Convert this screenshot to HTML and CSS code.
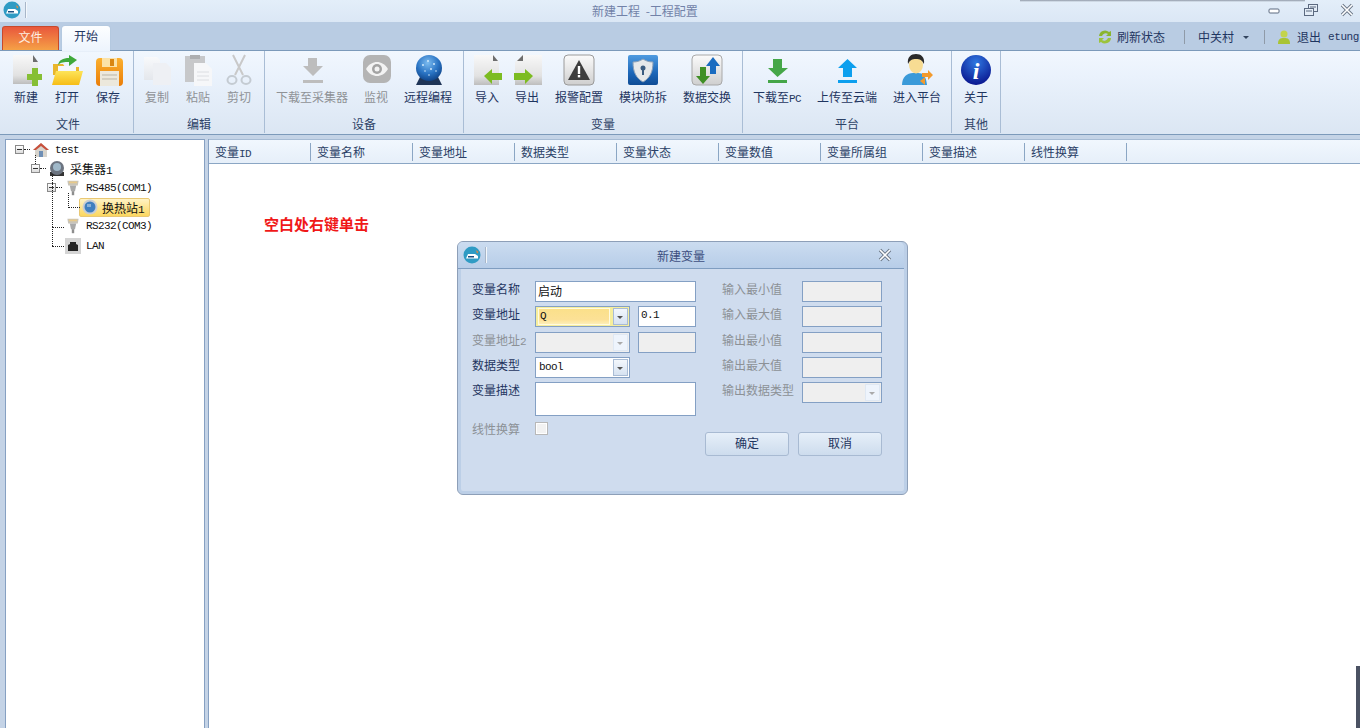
FILE: index.html
```html
<!DOCTYPE html>
<html lang="en">
<head>
  <meta charset="UTF-8" />
  <title>新建工程 -工程配置</title>
  <link rel="stylesheet" href="styles.css">
</head>
<body>
  <svg class="defs" aria-hidden="true">
    <defs>
      <linearGradient id="paper" x1="0" y1="0" x2="0" y2="1"><stop offset="0" stop-color="#f8f8f8"/><stop offset=".7" stop-color="#e2e2e2"/><stop offset="1" stop-color="#bdbdbd"/></linearGradient>
      <linearGradient id="paleDoc" x1="0" y1="0" x2="0" y2="1"><stop offset="0" stop-color="#f8f9fb"/><stop offset="1" stop-color="#e4e7ec"/></linearGradient>
      <linearGradient id="folder" x1="0" y1="0" x2="0" y2="1"><stop offset="0" stop-color="#fde45a"/><stop offset="1" stop-color="#f6bd16"/></linearGradient>
      <linearGradient id="floppy" x1="0" y1="0" x2="0" y2="1"><stop offset="0" stop-color="#fbb02f"/><stop offset="1" stop-color="#ea7d08"/></linearGradient>
      <linearGradient id="tile" x1="0" y1="0" x2="0" y2="1"><stop offset="0" stop-color="#fbfbfb"/><stop offset="1" stop-color="#cfcfcf"/></linearGradient>
      <linearGradient id="shieldBg" x1="0" y1="0" x2="0" y2="1"><stop offset="0" stop-color="#4f9be0"/><stop offset=".6" stop-color="#1c66b8"/><stop offset="1" stop-color="#0f4c95"/></linearGradient>
      <radialGradient id="globe" cx=".45" cy=".3" r=".75"><stop offset="0" stop-color="#7cbcf0"/><stop offset=".55" stop-color="#2a74c4"/><stop offset="1" stop-color="#0c3d80"/></radialGradient>
      <radialGradient id="infoBg" cx=".5" cy=".25" r=".8"><stop offset="0" stop-color="#2f77e0"/><stop offset="1" stop-color="#07108a"/></radialGradient>
      <symbol id="logo" viewBox="0 0 18 18">
        <circle cx="9" cy="9" r="8.5" fill="#2f9bc4"/>
        <path d="M3 12.5 5 8h7l3 2v2.500z" fill="#fff"/>
        <path d="M13 4l2.500 2-1.500 1.500z" fill="#e88a3a"/>
        <rect x="5" y="10" width="6" height="1.500" fill="#1b4f80"/>
      </symbol>
      <symbol id="serial" viewBox="0 0 16 20">
        <path d="M1 1h14l-1 6H2z" fill="#c9c4b8"/>
        <path d="M3 2h10v2H3z" fill="#e8c98a"/>
        <path d="M4 7h8l-1.500 7h-5z" fill="#a9a9a9"/>
        <rect x="6.500" y="14" width="3" height="5" fill="#8d8d8d"/>
      </symbol>
      <symbol id="winClose" viewBox="0 0 16 14">
        <path d="M3 2l10 10M13 2 3 12" stroke="#6b7788" stroke-width="3.400"/>
        <path d="M3 2l10 10M13 2 3 12" stroke="#fff" stroke-width="1.600"/>
      </symbol>
    </defs>
  </svg>

  <header class="titlebar">
    <svg class="logo" viewBox="0 0 18 18"><use href="#logo"/></svg>
    <span class="title-sep"></span>
    <span class="app-title">新建工程 -工程配置</span>
    <div class="win-btns">
      <svg viewBox="0 0 16 14"><rect x="2" y="6" width="10" height="4" rx="1" fill="#fff" stroke="#5c6a80"/></svg>
      <svg viewBox="0 0 16 14"><rect x="5.500" y="1.500" width="9" height="7" fill="#e4edf7" stroke="#5c6a80"/><rect x="1.500" y="5.500" width="9" height="7" fill="#e4edf7" stroke="#5c6a80"/><path d="M3 8h6M7 4h6" stroke="#5c6a80"/></svg>
      <svg viewBox="0 0 16 14"><use href="#winClose"/></svg>
    </div>
  </header>

  <nav class="tabstrip">
    <span class="tab tab-file">文件</span>
    <span class="tab tab-home">开始</span>
    <div class="status">
      <svg class="status-icon" viewBox="0 0 16 16"><path d="M2 7a6 6 0 0 1 10-4l2-1v5H9l2-2a4 4 0 0 0-6 2z" fill="#8ab52f"/><path d="M14 9a6 6 0 0 1-10 4l-2 1V9h5l-2 2a4 4 0 0 0 6-2z" fill="#9cc33c"/></svg>
      <span class="status-refresh">刷新状态</span>
      <span class="status-sep"></span>
      <span class="status-site">中关村</span>
      <span class="status-caret"></span>
      <span class="status-sep"></span>
      <svg class="status-user" viewBox="0 0 12 14"><circle cx="6" cy="4" r="3.500" fill="#c3d44c"/><path d="M0 14c0-5 2-6 6-6s6 1 6 6z" fill="#a9c434"/></svg>
      <span class="status-exit">退出</span>
      <span class="status-name lat">etung</span>
    </div>
  </nav>

  <section class="ribbon">
    <div class="group group-file">
      <div class="tools">
        <div class="tool">
          <svg viewBox="0 0 32 32"><path d="M3 1h18l7 7v22H3z" fill="url(#paper)"/><path d="M23 1l5 7h-5z" fill="#6d6d6d"/><path d="M22 14h6v6h5v6h-5v6h-6v-6h-5v-6h5z" fill="#86bf35"/></svg>
          <span>新建</span>
        </div>
        <div class="tool">
          <svg viewBox="0 0 32 32"><path d="M2 10h10l2 3h14v8H2z" fill="#e9b62c"/><rect x="7" y="12" width="18" height="10" fill="#f4f7fa"/><path d="M5 17h27l-4 14H1z" fill="url(#folder)"/><path d="M7 11c1-5 5-7 11-7V1l8 5-8 6V8c-5 0-8 0-11 3z" fill="#3fa93a"/></svg>
          <span>打开</span>
        </div>
        <div class="tool">
          <svg viewBox="0 0 32 32"><rect x="4" y="4" width="27" height="28" rx="4" fill="url(#floppy)"/><rect x="10" y="4" width="15" height="9" fill="#fbe2a8"/><rect x="18" y="5" width="4" height="7" fill="#d98612"/><rect x="8" y="17" width="19" height="15" fill="#ece8dc"/><path d="M10 21h15M10 25h15" stroke="#b9b5a8"/></svg>
          <span>保存</span>
        </div>
      </div>
      <div class="group-name">文件</div>
    </div>

    <div class="group group-edit">
      <div class="tools">
        <div class="tool off">
          <svg viewBox="0 0 32 32"><path d="M3 3h13l3 3v20H3z" fill="url(#paleDoc)"/><path d="M12 9h13l5 5v17H12z" fill="#eef0f4"/></svg>
          <span>复制</span>
        </div>
        <div class="tool off">
          <svg viewBox="0 0 32 32"><rect x="3" y="2" width="20" height="26" fill="#c7c8ca"/><rect x="8" y="1" width="10" height="4" fill="#adaeb0"/><path d="M12 9h12l6 6v17H12z" fill="#f6f7f9"/><path d="M15 18h12M15 22h12M15 26h12" stroke="#dcdee2"/></svg>
          <span>粘贴</span>
        </div>
        <div class="tool off">
          <svg viewBox="0 0 32 32"><path d="M10 1l10 20M22 1 12 21" stroke="#c9c9c9" stroke-width="2" fill="none"/><ellipse cx="9" cy="26" rx="4.500" ry="4" fill="none" stroke="#c4cbd2" stroke-width="2"/><ellipse cx="23" cy="26" rx="4.500" ry="4" fill="none" stroke="#c4cbd2" stroke-width="2"/></svg>
          <span>剪切</span>
        </div>
      </div>
      <div class="group-name">编辑</div>
    </div>

    <div class="group group-device">
      <div class="tools">
        <div class="tool off">
          <svg viewBox="0 0 32 32"><path d="M12 4h9v8h6L17 22 7 12h5z" fill="#bdbdbd"/><rect x="7" y="26" width="20" height="3" fill="#bdbdbd"/></svg>
          <span>下载至采集器</span>
        </div>
        <div class="tool off">
          <svg viewBox="0 0 32 32"><rect x="3" y="1" width="28" height="28" rx="7" fill="#b4b4b4"/><path d="M6 15c3-5 7-7 11-7s8 2 11 7c-3 5-7 7-11 7s-8-2-11-7z" fill="#f3f3f3"/><circle cx="17" cy="15" r="5" fill="#a3a3a3"/><circle cx="17" cy="15" r="2.500" fill="#f3f3f3"/></svg>
          <span>监视</span>
        </div>
        <div class="tool">
          <svg viewBox="0 0 32 32"><path d="M8 23h18l4 8H4z" fill="#1f3557"/><circle cx="17" cy="14" r="13" fill="url(#globe)"/><g fill="#cfe8fb"><circle cx="11" cy="11" r="1"/><circle cx="16" cy="7" r="1"/><circle cx="22" cy="10" r="1"/><circle cx="13" cy="17" r=".8"/><circle cx="19" cy="15" r="1"/><circle cx="24" cy="17" r=".8"/><circle cx="17" cy="21" r=".8"/></g></svg>
          <span>远程编程</span>
        </div>
      </div>
      <div class="group-name">设备</div>
    </div>

    <div class="group group-vars">
      <div class="tools">
        <div class="tool">
          <svg viewBox="0 0 32 32"><path d="M3 1h19l6 7v23H3z" fill="url(#paper)"/><path d="M22 1l5 6h-5z" fill="#6d6d6d"/><path d="M13 22l8-7v4h10v7H21v4z" fill="#7cbc21"/></svg>
          <span>导入</span>
        </div>
        <div class="tool">
          <svg viewBox="0 0 32 32"><path d="M31 1H12L4 8v23h27z" fill="url(#paper)"/><path d="M12 1 6 7h6z" fill="#6d6d6d"/><path d="M22 22l-8-7v4H3v7h11v4z" fill="#7cbc21"/></svg>
          <span>导出</span>
        </div>
        <div class="tool">
          <svg viewBox="0 0 32 32"><rect x="1" y="1" width="30" height="30" rx="4" fill="url(#tile)" stroke="#9a9a9a"/><path d="M16 6l11 20H5z" fill="#3d3d3d"/><rect x="14.800" y="12" width="2.400" height="8" fill="#fff"/><rect x="14.800" y="21" width="2.400" height="2.400" fill="#fff"/></svg>
          <span>报警配置</span>
        </div>
        <div class="tool">
          <svg viewBox="0 0 32 32"><rect x="1" y="1" width="30" height="30" rx="2" fill="url(#shieldBg)"/><path d="M16 5c3 2 6 3 10 3 0 10-3 16-10 20C9 24 6 18 6 8c4 0 7-1 10-3z" fill="#e6e8ea" stroke="#8aa0b8"/><circle cx="16" cy="14" r="2.500" fill="#3b5c80"/><rect x="15" y="15" width="2" height="6" fill="#3b5c80"/></svg>
          <span>模块防拆</span>
        </div>
        <div class="tool">
          <svg viewBox="0 0 32 32"><rect x="1" y="1" width="30" height="30" rx="4" fill="url(#tile)" stroke="#a8a8a8"/><path d="M22 3l7 9h-4v8h-6v-8h-4z" fill="#1a6cc0"/><path d="M9 13h6v9h4l-7 8-7-8h4z" fill="#3f8f25"/></svg>
          <span>数据交换</span>
        </div>
      </div>
      <div class="group-name">变量</div>
    </div>

    <div class="group group-platform">
      <div class="tools">
        <div class="tool">
          <svg viewBox="0 0 32 32"><path d="M12 5h9v9h6L16.500 23 7 14h5z" fill="#45a648"/><rect x="7" y="26" width="19" height="3" fill="#45a648"/></svg>
          <span>下载至<i class="lat">PC</i></span>
        </div>
        <div class="tool">
          <svg viewBox="0 0 32 32"><path d="M16.500 5 26 14h-5v9h-9v-9H7z" fill="#0c9fee"/><rect x="7" y="26" width="19" height="3" fill="#0c9fee"/></svg>
          <span>上传至云端</span>
        </div>
        <div class="tool">
          <svg viewBox="0 0 32 32"><path d="M1 31c0-8 5-12 11-12h5c5 0 8 3 9 12z" fill="#3a9ad9"/><ellipse cx="15" cy="11" rx="7" ry="8.500" fill="#f7dc93"/><path d="M7 10C6 3 10 0 15 0s9 3 8 10c-2-4-4-5-8-5s-6 1-8 5z" fill="#2a2a2a"/><path d="M21 19h6v-3l5 5-5 5v-3h-6zM24 31l-5-4 5-4z" fill="#f29a2e"/></svg>
          <span>进入平台</span>
        </div>
      </div>
      <div class="group-name">平台</div>
    </div>

    <div class="group group-other">
      <div class="tools">
        <div class="tool">
          <svg viewBox="0 0 32 32"><circle cx="16" cy="16" r="15" fill="url(#infoBg)"/><text x="16" y="25" class="info-i">i</text></svg>
          <span>关于</span>
        </div>
      </div>
      <div class="group-name">其他</div>
    </div>
  </section>

  <main class="workspace">
    <aside class="tree">
      <div class="node lvl0">
        <span class="box"></span>
        <svg viewBox="0 0 16 16"><path d="M8 1 0 8h2v7h12V8h2z" fill="#d8d4cc"/><path d="M8 1 0 8h3l5-4 5 4h3z" fill="#c8503c"/><rect x="6" y="9" width="4" height="6" fill="#6f8fb5"/></svg>
        <span class="lat name">test</span>
      </div>
      <div class="node lvl1">
        <span class="box"></span>
        <svg viewBox="0 0 16 16"><path d="M1 11h14v4H1z" fill="#333"/><circle cx="8" cy="7" r="7" fill="#6c7480"/><circle cx="8" cy="6" r="4" fill="#9fb8c9"/></svg>
        <span class="name">采集器<i class="lat">1</i></span>
      </div>
      <div class="node lvl2">
        <span class="box"></span>
        <svg viewBox="0 0 16 20"><use href="#serial"/></svg>
        <span class="lat name">RS485(COM1)</span>
      </div>
      <div class="node lvl3">
        <span class="selected">
          <svg viewBox="0 0 16 16"><circle cx="8" cy="8" r="7.500" fill="#c9ced4"/><circle cx="8" cy="8" r="5.500" fill="#3f7fc0"/><path d="M5 5h4v3H5z" fill="#8ab1d6"/></svg>
          <span class="name">换热站<i class="lat">1</i></span>
        </span>
      </div>
      <div class="node lvl2b">
        <svg viewBox="0 0 16 20"><use href="#serial"/></svg>
        <span class="lat name">RS232(COM3)</span>
      </div>
      <div class="node lvl2b last">
        <svg viewBox="0 0 16 16"><rect width="16" height="16" fill="#d4d4d4"/><path d="M3 13V7l2-1V4h6v2l2 1v6z" fill="#222"/></svg>
        <span class="lat name">LAN</span>
      </div>
    </aside>

    <section class="table">
      <div class="thead">
        <span class="th">变量<i class="lat">ID</i></span>
        <span class="th">变量名称</span>
        <span class="th">变量地址</span>
        <span class="th">数据类型</span>
        <span class="th">变量状态</span>
        <span class="th">变量数值</span>
        <span class="th">变量所属组</span>
        <span class="th">变量描述</span>
        <span class="th">线性换算</span>
      </div>
      <p class="hint">空白处右键单击</p>
    </section>
  </main>

  <div class="dialog">
    <div class="dlg-head">
      <svg class="logo" viewBox="0 0 18 18"><use href="#logo"/></svg>
      <span class="title-sep"></span>
      <span class="dlg-title">新建变量</span>
      <svg class="dlg-close" viewBox="0 0 16 14"><use href="#winClose"/></svg>
    </div>
    <div class="dlg-body">
      <div class="col col-left">
        <div class="row">
          <label>变量名称</label>
          <span class="input wide">启动</span>
        </div>
        <div class="row">
          <label>变量地址</label>
          <span class="combo focus"><span class="combo-value lat">Q</span><span class="combo-btn"></span></span>
          <span class="input small lat">0.1</span>
        </div>
        <div class="row">
          <label class="dim">变量地址<i class="lat">2</i></label>
          <span class="combo off"><span class="combo-value"></span><span class="combo-btn"></span></span>
          <span class="input small off"></span>
        </div>
        <div class="row">
          <label>数据类型</label>
          <span class="combo"><span class="combo-value lat">bool</span><span class="combo-btn"></span></span>
        </div>
        <div class="row tall">
          <label>变量描述</label>
          <span class="input wide"></span>
        </div>
        <div class="row check-row">
          <label class="dim">线性换算</label>
          <span class="check"></span>
        </div>
      </div>
      <div class="col col-right">
        <div class="row"><label class="dim">输入最小值</label><span class="input off range"></span></div>
        <div class="row"><label class="dim">输入最大值</label><span class="input off range"></span></div>
        <div class="row"><label class="dim">输出最小值</label><span class="input off range"></span></div>
        <div class="row"><label class="dim">输出最大值</label><span class="input off range"></span></div>
        <div class="row"><label class="dim">输出数据类型</label><span class="combo off range"><span class="combo-value"></span><span class="combo-btn"></span></span></div>
        <div class="dlg-actions">
          <button type="button">确定</button>
          <button type="button">取消</button>
        </div>
      </div>
    </div>
  </div>

  <div class="edge-top"></div>
  <div class="edge-right"></div>
</body>
</html>
```

FILE: styles.css
```css
* {
  box-sizing: border-box;
}

html, body {
  margin: 0;
  height: 100%;
}

body {
  position: relative;
  width: 1360px;
  height: 728px;
  overflow: hidden;
  background: #c4d3e6;
  color: #1f3560;
  font: 12px/17px "Noto Sans CJK SC", sans-serif;
}

.defs {
  position: absolute;
  width: 0;
  height: 0;
}

.lat {
  font: normal 11px "Liberation Mono", monospace;
  letter-spacing: -0.6px;
  color: inherit;
}

/* title bar */
.titlebar {
  display: flex;
  align-items: center;
  height: 22px;
  padding: 0 3px 2px;
  background: linear-gradient(#e3eef9, #dbe7f5);
}

.logo {
  width: 18px;
  height: 18px;
  flex: none;
}

.title-sep {
  width: 1px;
  height: 16px;
  margin-left: 4px;
  background: #a8b6c8;
  box-shadow: 1px 0 0 #f4f8fc;
}

.app-title {
  margin-left: 566px;
  word-spacing: 3px;
  color: #7282a8;
}

.win-btns {
  display: flex;
  gap: 20px;
  margin-left: auto;
  padding-right: 2px;
}

.win-btns svg {
  width: 16px;
  height: 14px;
}

/* tab strip */
.tabstrip {
  display: flex;
  align-items: flex-end;
  height: 29px;
  padding-left: 2px;
  background: #b9cce3;
  border-bottom: 1px solid #7c9aba;
}

.tab {
  text-align: center;
}

.tab-file {
  width: 57px;
  height: 24px;
  line-height: 20px;
  color: #fdeee0;
  background: linear-gradient(#e9573c, #f5a146);
  border: 1px solid #c8492c;
  border-bottom: 0;
  border-radius: 3px 3px 0 0;
}

.tab-home {
  width: 48px;
  height: 25px;
  margin: 0 0 -1px 3px;
  line-height: 19px;
  background: linear-gradient(#fdfeff, #edf4fd);
  border-radius: 3px 3px 0 0;
  box-shadow: 0 0 1px #8fa9c6;
}

.status {
  display: flex;
  align-items: center;
  align-self: center;
  margin-left: auto;
  margin-top: 1px;
}

.status-icon {
  width: 16px;
  height: 16px;
  margin-right: 4px;
}

.status-sep {
  width: 1px;
  height: 14px;
  background: #8f9aa8;
}

.status-refresh {
  margin-right: 19px;
}

.status-site {
  margin-left: 13px;
}

.status-caret {
  width: 0;
  height: 0;
  margin: 2px 15px 0 9px;
  border: 3px solid transparent;
  border-top: 3px solid #33445f;
  border-bottom: 0;
}

.status-user {
  width: 12px;
  height: 14px;
  margin-left: 13px;
}

.status-exit {
  margin-left: 7px;
}

.status-name {
  width: 32px;
  margin-left: 7px;
  letter-spacing: -0.4px;
  color: #1f3560;
}

/* ribbon */
.ribbon {
  display: flex;
  height: 84px;
  padding-left: 3px;
  background: linear-gradient(#f1f7fe, #eaf2fc 30%, #dbe6f3);
  border-bottom: 1px solid #7c9aba;
}

.group {
  display: flex;
  flex-direction: column;
  border-right: 1px solid #a9bdd5;
  margin-bottom: 1px;
}

.group-file, .group-edit { width: 131px; }
.group-device { width: 199px; }
.group-vars { width: 279px; }
.group-platform { width: 209px; }
.group-other { width: 49px; }

.tools {
  display: flex;
  justify-content: center;
  height: 64px;
  padding-top: 3px;
}

.group-file .tools, .group-edit .tools {
  padding-right: 2px;
}

.tool {
  display: flex;
  flex-direction: column;
  align-items: center;
  padding: 0 8.5px;
}

.group-device .tool, .group-vars .tool, .group-platform .tool {
  padding: 0 8px;
}

.tool svg {
  width: 32px;
  height: 32px;
  margin: 0 -6px;
  flex: none;
}

.tool span {
  margin-top: 2px;
  white-space: nowrap;
}

.tool.off span {
  color: #8f9296;
}

.group-name {
  text-align: center;
  line-height: 17px;
  color: #2d4266;
}

.info-i {
  font: italic bold 24px "Liberation Serif", serif;
  fill: #fff;
  text-anchor: middle;
}

/* workspace */
.workspace {
  display: flex;
  height: 593px;
  padding: 4px 0 0 5px;
  gap: 3px;
}

.tree {
  width: 200px;
  padding: 0 0 0 9px;
  background: #fff;
  border: 1px solid #86a0c2;
  border-bottom: 0;
}

.node {
  position: relative;
  display: flex;
  align-items: center;
  height: 19.2px;
  white-space: nowrap;
}

.node svg {
  width: 16px;
  height: 16px;
  flex: none;
}

.node .name, .name .lat {
  color: #111;
}

.box {
  position: relative;
  width: 9px;
  height: 9px;
  margin-right: 9px;
  background: linear-gradient(#fff, #dcdcdc);
  border: 1px solid #8a8a8a;
  flex: none;
}

.box::before {
  content: "";
  position: absolute;
  left: 1px;
  top: 3px;
  width: 5px;
  height: 1px;
  background: #333;
}

.box::after {
  content: "";
  position: absolute;
  left: 8px;
  top: 3px;
  width: 6px;
  border-top: 1px dotted #222;
}

.lvl0 .name { margin-left: 6px; }
.lvl1 { padding-left: 16px; }
.lvl1 .name { margin-left: 5px; }
.lvl2 { padding-left: 32px; }
.lvl2 .name { margin-left: 5px; }
.lvl2b { padding-left: 50px; }
.lvl2b .name { margin-left: 5px; }

/* dotted tree lines */
.lvl1::before, .lvl2::before, .lvl2b::before {
  content: "";
  position: absolute;
  border-left: 1px dotted #222;
}

.lvl1::before { left: 20px; top: -4px; height: 9px; }
.lvl2::before { left: 37px; top: -4px; height: 9px; }

.lvl2b::before {
  left: 37px;
  top: -34px;
  height: 44px;
}

.lvl2b.last::before {
  top: -10px;
  height: 20px;
}

.lvl2b::after {
  content: "";
  position: absolute;
  left: 37px;
  top: 10px;
  width: 12px;
  border-top: 1px dotted #222;
}

.lvl3 {
  align-items: flex-start;
  padding-left: 64px;
}

.lvl3::before {
  content: "";
  position: absolute;
  left: 53px;
  top: -5px;
  height: 14px;
  width: 11px;
  border-left: 1px dotted #222;
  border-bottom: 1px dotted #222;
}

.selected {
  display: flex;
  align-items: center;
  height: 19px;
  width: 71px;
  padding: 0 2px;
  background: linear-gradient(#fff3c4, #fbd75f);
  border: 1px solid #e9c874;
  border-radius: 2px;
}

.selected .name {
  margin-left: 4px;
}

.table {
  flex: 1;
  background: #fff;
  border-left: 1px solid #86a0c2;
}

.thead {
  display: flex;
  height: 25px;
  padding-top: 3px;
  background: linear-gradient(#f1f7fe, #e6eff9);
  border-top: 1px solid #a6bbd4;
  border-bottom: 1px solid #8ba6c4;
}

.th {
  width: 102px;
  height: 18px;
  padding-left: 6px;
  border-right: 1px solid #8ba6c4;
  line-height: 18px;
  color: #2a3f66;
}

.hint {
  margin: 50px 0 0 55px;
  font-size: 15px;
  line-height: 20px;
  font-weight: 700;
  color: #f01818;
}

/* dialog */
.dialog {
  position: absolute;
  left: 457px;
  top: 241px;
  width: 451px;
  height: 254px;
  background: #cfdcee;
  border: 1px solid #8d9fb8;
  border-radius: 6px;
  box-shadow: inset 0 0 0 3px #bccfe7;
}

.dlg-head {
  display: flex;
  align-items: center;
  height: 27px;
  margin-right: 3px;
  padding: 0 5px;
  background: linear-gradient(#cbdcf0, #b7cde8);
  border-bottom: 1px solid #7f9dc0;
  border-radius: 5px 5px 0 0;
}

.dlg-title {
  margin-left: 171px;
  color: #3c4e7e;
}

.dlg-close {
  width: 16px;
  height: 14px;
  margin-left: auto;
  margin-right: 6px;
}

.dlg-body {
  display: flex;
  padding: 12px 0 0 14px;
}

.col {
  display: flex;
  flex-direction: column;
  gap: 4.25px;
}

.col-left {
  width: 250px;
}

.col-right {
  width: 160px;
}

.row {
  display: flex;
  height: 21px;
}

.row label {
  width: 63px;
  flex: none;
  line-height: 15px;
  white-space: nowrap;
}

.col-right .row label {
  width: 80px;
}

.dim, .dim .lat {
  color: #8c9196;
}

.input, .combo {
  display: block;
  height: 21px;
  padding-left: 2px;
  line-height: 17px;
  color: #111;
  background: #fff;
  border: 1px solid #84a0c4;
}

.input.wide {
  width: 161px;
}

.input.small {
  width: 58px;
  margin-left: 8px;
}

.input.off {
  background: #efefef;
}

.input.range, .combo.range {
  width: 80px;
}

.combo {
  display: flex;
  width: 95px;
  padding: 1px 1px 1px 2px;
  gap: 3px;
}

.combo-value {
  flex: 1;
  padding-left: 1px;
  line-height: 17px;
}

.combo-btn {
  position: relative;
  width: 15px;
  background: linear-gradient(#f3f7fc, #d6e2f1);
  border: 1px solid #a9bcd5;
}

.combo-btn::after {
  content: "";
  position: absolute;
  left: 3px;
  top: 7px;
  border: 3px solid transparent;
  border-top: 3px solid #555;
  border-bottom: 0;
}

.combo.focus {
  background: #f6ee9c;
  border-color: #84a0c4;
}

.combo.focus .combo-value {
  line-height: 15px;
  background: linear-gradient(#fbe08a, #fce196 70%, #fdeeb8);
  border: 1px solid #fffbe0;
}

.combo.off {
  background: #efefef;
}

.combo.off .combo-btn {
  background: #eef4fc;
  border-color: #dfe8f3;
}

.combo.off .combo-btn::after {
  border-top-color: #aaa;
}

.row.tall {
  height: 34px;
}

.row.tall .input {
  height: 34px;
}

.check-row {
  margin-top: 2px;
}

.check-row label {
  margin-top: -1px;
}

.check {
  width: 13px;
  height: 13px;
  background: #f2f2f2;
  border: 1px solid #b8b8b8;
  box-shadow: inset 0 0 0 1px #fff;
}

.dlg-actions {
  display: flex;
  gap: 9px;
  margin: 25px 0 0 -17px;
}

button {
  width: 84px;
  height: 24px;
  padding: 0 0 3px;
  font: inherit;
  color: #1f3560;
  background: linear-gradient(#e6eff9, #cddced);
  border: 1px solid #a8bad2;
  border-radius: 3px;
}

/* stray bits of other windows in the shot */
.edge-top {
  position: absolute;
  left: 1020px;
  top: 0;
  width: 285px;
  height: 2px;
  background: linear-gradient(#8f98a6, rgba(143, 152, 166, 0));
}

.edge-right {
  position: absolute;
  right: 0;
  top: 666px;
  width: 4px;
  height: 62px;
  background: #4b5263;
}
```
